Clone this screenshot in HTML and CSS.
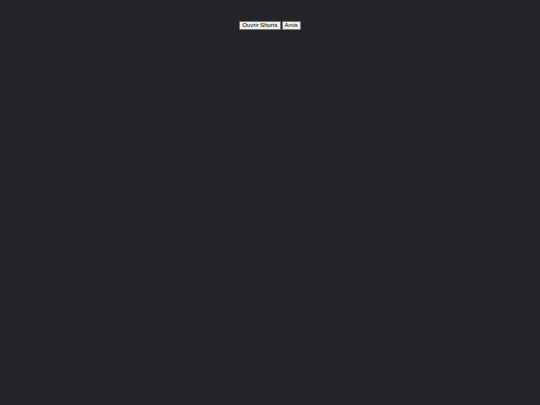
FILE: index.html
```html
<!DOCTYPE html>
<html>
<head>
<meta charset="utf-8">
<link rel="stylesheet" href="styles.css">
</head>
<body>
<div class="bar">
  <button class="btn">Ouvrir Shorts</button>
  <button class="btn">Amis</button>
</div>
</body>
</html>
```
FILE: styles.css
```css
html, body {
  margin: 0;
  padding: 0;
  background: #232428;
  height: 100%;
}
.bar {
  display: flex;
  justify-content: center;
  gap: 1px;
  padding-top: 21px;
}
.btn {
  font-family: "Liberation Sans", Arial, sans-serif;
  font-size: 6px;
  line-height: 7px;
  padding: 0 2px;
  margin: 0;
  height: 9px;
  background: #f0f0f0;
  color: #000;
  border: 1px solid #767676;
  border-radius: 1px;
}
```
